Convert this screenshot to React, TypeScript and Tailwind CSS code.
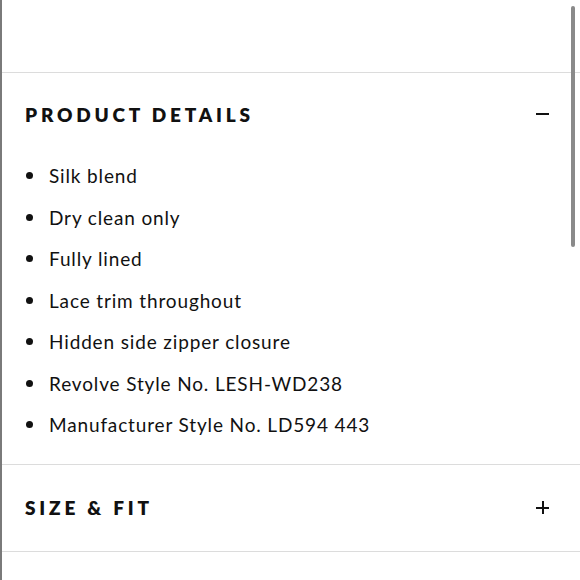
import React from 'react';

const details = [
  'Silk blend',
  'Dry clean only',
  'Fully lined',
  'Lace trim throughout',
  'Hidden side zipper closure',
  'Revolve Style No. LESH-WD238',
  'Manufacturer Style No. LD594 443',
];

const Minus = () => <span className="block w-[13px] h-[2px] bg-[#111]" />;

const Plus = () => (
  <span className="relative block w-[13px] h-[13px]">
    <span className="absolute left-0 top-[5.5px] w-[13px] h-[2px] bg-[#111]" />
    <span className="absolute top-0 left-[5.5px] w-[2px] h-[13px] bg-[#111]" />
  </span>
);

export default function App() {
  return (
    <div
      className="relative w-[580px] h-[580px] overflow-hidden bg-white border-l-2 border-[#7a7a7a] text-[#111]"
      style={{ fontFamily: 'Lato, "Noto Sans", sans-serif' }}
    >
      <div className="h-[72px]" />

      {/* Product details (open) */}
      <section className="border-t border-[#dcdcdc]">
        <div className="h-[82px] flex items-center justify-between pl-[23px] pr-[31px]">
          <h3 className="text-[19px] font-extrabold tracking-[0.2em] leading-none">PRODUCT DETAILS</h3>
          <Minus />
        </div>
        <ul className="pb-[18px]">
          {details.map((d) => (
            <li key={d} className="h-[41.5px] flex items-center pl-[24px]">
              <span className="w-[7px] h-[7px] rounded-full bg-[#111] shrink-0" />
              <span className="ml-[16px] text-[19px] tracking-[0.045em] leading-none">{d}</span>
            </li>
          ))}
        </ul>
      </section>

      {/* Size & fit (closed) */}
      <section className="border-t border-b border-[#dcdcdc]">
        <div className="h-[86px] flex items-center justify-between pl-[23px] pr-[31px]">
          <h3 className="text-[19px] font-extrabold tracking-[0.2em] leading-none">SIZE &amp; FIT</h3>
          <Plus />
        </div>
      </section>

      {/* scrollbar */}
      <div className="absolute right-[5px] top-[6px] w-[4px] h-[241px] rounded-full bg-[#8a8a8a]" />
    </div>
  );
}
